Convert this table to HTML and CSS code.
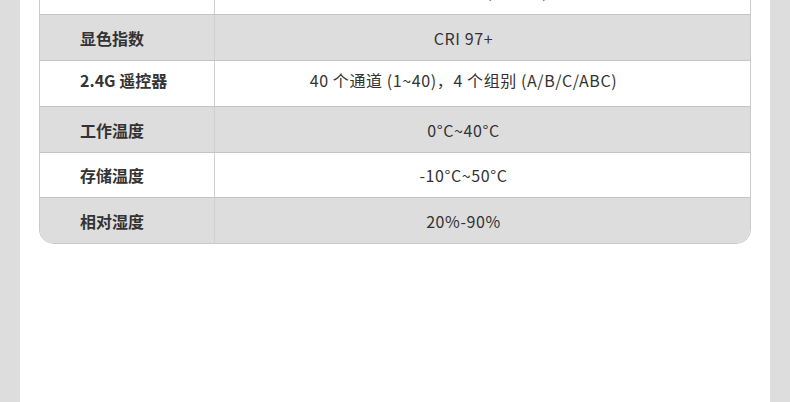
FILE: index.html
```html
<!DOCTYPE html>
<html lang="zh-CN">
<head>
<meta charset="utf-8">
<title>规格参数</title>
<link rel="stylesheet" href="styles.css">
</head>
<body>
<div class="page">
  <div class="spec">
    <div class="row row-white row-cut">
      <div class="key">色温范围</div>
      <div class="val">2700K-6500K (可调节)</div>
    </div>
    <div class="row row-gray">
      <div class="key">显色指数</div>
      <div class="val">CRI 97+</div>
    </div>
    <div class="row row-white row-lift">
      <div class="key">2.4G 遥控器</div>
      <div class="val">40 个通道 (1~40)，4 个组别 (A/B/C/ABC)</div>
    </div>
    <div class="row row-gray">
      <div class="key">工作温度</div>
      <div class="val">0°C~40°C</div>
    </div>
    <div class="row row-white row-short">
      <div class="key">存储温度</div>
      <div class="val">-10°C~50°C</div>
    </div>
    <div class="row row-gray row-last">
      <div class="key">相对湿度</div>
      <div class="val">20%-90%</div>
    </div>
  </div>
</div>
</body>
</html>
```

FILE: styles.css
```css
html, body {
  margin: 0;
  padding: 0;
  background: #dddddd;
}
body {
  font-family: "Noto Sans CJK SC", "Noto Sans", sans-serif;
  color: #333333;
  font-size: 16px;
}
.page {
  margin: 0 20px;
  background: #ffffff;
  min-height: 402px;
  padding: 0 19px;
  overflow: hidden;
}
.spec {
  margin-top: -31px;
  border: 1px solid #cacaca;
  border-top: none;
  border-radius: 0 0 15px 15px;
  overflow: hidden;
}
.row {
  display: grid;
  grid-template-columns: 175px 1fr;
  height: 45px;
  border-bottom: 1px solid #c4c4c4;
}
.row-last {
  border-bottom: none;
}
.row-short {
  height: 44px;
}
.row-gray {
  background: #dddddd;
}
.row-white {
  background: #ffffff;
}
.key {
  display: flex;
  align-items: center;
  padding-left: 40px;
  font-weight: 700;
  border-right: 1px solid #cfcfcf;
  white-space: nowrap;
}
.val {
  display: flex;
  align-items: center;
  justify-content: center;
  padding-right: 38px;
  font-weight: 400;
  letter-spacing: 0.6px;
  white-space: nowrap;
}
.row-lift .key,
.row-lift .val {
  padding-bottom: 8px;
}
.row-cut .key,
.row-cut .val {
  color: #666666;
  padding-bottom: 2px;
}
```
